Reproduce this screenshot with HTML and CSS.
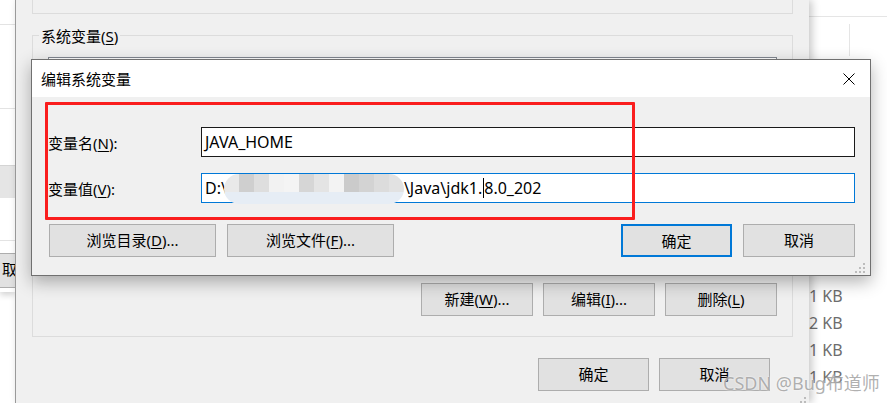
FILE: index.html
```html
<!DOCTYPE html>
<html lang="zh-CN">
<head>
    <meta charset="UTF-8">
    <title>编辑系统变量</title>
    <link rel="stylesheet" href="styles.css">
</head>
<body>
    <!-- window behind, left edge -->
    <div class="side-win">
        <div class="side-line side-top"></div>
        <div class="side-line side-mid"></div>
        <div class="side-gap"></div>
        <div class="side-band"></div>
        <div class="side-line side-low"></div>
        <div class="side-btn">取消</div>
    </div>

    <!-- explorer behind, right edge -->
    <div class="explorer">
        <div class="exp-head"></div>
        <div class="exp-split"></div>
        <div class="exp-sizes">
            <span>1 KB</span>
            <span>2 KB</span>
            <span>1 KB</span>
            <span>1 KB</span>
        </div>
    </div>

    <!-- 环境变量 window -->
    <div class="env-win">
        <div class="user-group"></div>
        <div class="sys-group">
            <div class="group-title">系统变量(<u>S</u>)</div>
            <div class="var-list"></div>
            <div class="group-actions">
                <button class="btn">新建(<u>W</u>)...</button>
                <button class="btn">编辑(<u>I</u>)...</button>
                <button class="btn">删除(<u>L</u>)</button>
            </div>
        </div>
        <div class="env-footer">
            <button class="btn">确定</button>
            <button class="btn">取消</button>
        </div>
        <svg class="env-grip" width="11" height="11" viewBox="0 0 11 11">
            <rect x="8" y="0" width="2" height="2"/><rect x="4" y="4" width="2" height="2"/><rect x="8" y="4" width="2" height="2"/>
            <rect x="0" y="8" width="2" height="2"/><rect x="4" y="8" width="2" height="2"/><rect x="8" y="8" width="2" height="2"/>
        </svg>
    </div>

    <!-- 编辑系统变量 dialog -->
    <div class="edit-dlg">
        <div class="dlg-title">
            <span>编辑系统变量</span>
            <svg class="close-x" width="12" height="12" viewBox="0 0 12 12">
                <path d="M0.5 0.5 L11.5 11.5 M11.5 0.5 L0.5 11.5" stroke="#000" stroke-width="1" fill="none"/>
            </svg>
        </div>
        <div class="dlg-body">
            <div class="field-grid">
                <label>变量名(<u>N</u>):</label>
                <div class="text-box">JAVA_HOME</div>
                <label>变量值(<u>V</u>):</label>
                <div class="text-box focused">D:\<span class="redact"></span>\Java\jdk1.<span class="caret"></span>8.0_202</div>
            </div>
            <div class="dlg-actions">
                <button class="btn wide">浏览目录(<u>D</u>)...</button>
                <button class="btn wide">浏览文件(<u>F</u>)...</button>
                <span class="spacer"></span>
                <button class="btn default">确定</button>
                <button class="btn">取消</button>
            </div>
        </div>
        <div class="red-mark"></div>
        <svg class="dlg-grip" width="11" height="11" viewBox="0 0 11 11">
            <rect x="8" y="0" width="2" height="2"/><rect x="4" y="4" width="2" height="2"/><rect x="8" y="4" width="2" height="2"/>
            <rect x="0" y="8" width="2" height="2"/><rect x="4" y="8" width="2" height="2"/><rect x="8" y="8" width="2" height="2"/>
        </svg>
    </div>

    <div class="watermark">CSDN @Bug布道师</div>
</body>
</html>
```

FILE: styles.css
```css
* {
    box-sizing: border-box;
}
body {
    margin: 0;
    width: 887px;
    height: 403px;
    overflow: hidden;
    position: relative;
    background: #fff;
    font-family: "Noto Sans", "Noto Sans CJK SC", sans-serif;
    font-size: 15px;
    color: #000;
}
u {
    text-decoration: underline;
    text-underline-offset: 2px;
}

/* left window behind */
.side-win {
    position: absolute;
    left: 0;
    top: 0;
    width: 15px;
    height: 292px;
    background: #fff;
    box-shadow: 0 3px 6px rgba(0,0,0,0.18);
    overflow: hidden;
}
.side-line {
    border-bottom: 1px solid #e3e3e3;
}
.side-top {
    height: 25px;
}
.side-mid {
    height: 84px;
}
.side-gap {
    height: 56px;
}
.side-band {
    height: 33px;
    background: #e5e5e5;
    border-top: 1px solid #d4d4d4;
}
.side-low {
    height: 43px;
}
.side-btn {
    margin: 12px 0 0 -4px;
    width: 60px;
    height: 35px;
    padding-left: 5px;
    background: #e1e1e1;
    border: 1px solid #adadad;
    line-height: 31px;
    white-space: nowrap;
}

/* explorer behind, right */
.explorer {
    position: absolute;
    left: 800px;
    top: 0;
    right: 0;
    bottom: 0;
    background: #fff;
}
.exp-head {
    height: 17px;
    border-bottom: 1px solid #e5e5e5;
}
.exp-split {
    margin: 7px 0 0 49px;
    width: 1px;
    height: 32px;
    background: #e5e5e5;
}
.exp-sizes {
    margin-top: 227px;
    padding-left: 9px;
    display: flex;
    flex-direction: column;
    font-size: 16px;
    color: #6d6d6d;
}
.exp-sizes span {
    height: 27px;
    line-height: 27px;
}

/* environment variables window */
.env-win {
    position: absolute;
    left: 15px;
    top: 0;
    width: 794px;
    height: 403px;
    background: #f0f0f0;
    border-left: 1px solid #9a9a9a;
    box-shadow: 3px 0 8px rgba(0,0,0,0.22);
}
.user-group {
    margin: 0 16px;
    height: 14px;
    border: 1px solid #dcdcdc;
    border-top: 0;
}
.sys-group {
    margin: 21px 16px 0;
    padding: 0 15px 20px;
    border: 1px solid #dcdcdc;
}
.group-title {
    width: fit-content;
    margin: -10px 0 0 -9px;
    padding: 0 2px;
    background: #f0f0f0;
    line-height: 20px;
}
.var-list {
    margin-top: 11px;
    height: 213px;
    background: #fff;
    border: 1px solid #828790;
}
.group-actions {
    margin-top: 13px;
    display: flex;
    justify-content: flex-end;
    gap: 10px;
}
.env-footer {
    margin-top: 21px;
    padding-right: 39px;
    display: flex;
    justify-content: flex-end;
    gap: 10px;
}
.env-footer .btn {
    width: 111px;
}
.env-grip {
    position: absolute;
    right: 2px;
    bottom: -5px;
    fill: #bcbcbc;
}

/* buttons */
.btn {
    width: 112px;
    height: 33px;
    padding: 0;
    background: #e1e1e1;
    border: 1px solid #adadad;
    font-family: inherit;
    font-size: 15px;
    color: #000;
    line-height: 31px;
}
.btn.wide {
    width: 167px;
}
.btn.default {
    width: 111px;
    border: 2px solid #0078d7;
}

/* edit dialog */
.edit-dlg {
    position: absolute;
    left: 31px;
    top: 59px;
    width: 840px;
    height: 217px;
    background: #f0f0f0;
    border: 1px solid #707070;
    box-shadow: 0 6px 16px rgba(0,0,0,0.3);
}
.dlg-title {
    height: 37px;
    padding: 0 15px 0 9px;
    background: #fff;
    display: flex;
    align-items: center;
    justify-content: space-between;
}
.close-x {
    display: block;
}
.dlg-body {
    padding: 30px 15px 0 16px;
}
.field-grid {
    display: grid;
    grid-template-columns: 153px 1fr;
    row-gap: 16px;
    align-items: center;
}
.field-grid label {
    line-height: 20px;
    padding-top: 1px;
}
.text-box {
    height: 30px;
    padding: 0 3px;
    background: #fff;
    border: 1px solid #1a1a1a;
    font-size: 16px;
    line-height: 28px;
    white-space: nowrap;
}
.text-box.focused {
    border-color: #0078d7;
}
.redact {
    display: inline-block;
    vertical-align: top;
    width: 180px;
    height: 30px;
    margin: 0 0 0 -3px;
    border-radius: 15px;
    background:
        linear-gradient(90deg,
            #e9e9e9 0 15px, #cfcfcf 15px 30px, #dedede 30px 45px,
            #f2f2f2 45px 60px, #f4f4f4 60px 75px, #d6d6d6 75px 90px,
            #e4e4e4 90px 105px, #f3f3f3 105px 120px, #cbcbcb 120px 135px,
            #d3d3d3 135px 150px, #dcdcdc 150px 165px, #e2e2e2 165px 180px) top / 100% 18px no-repeat,
        #e6edf5;
    filter: blur(0.6px);
}
.caret {
    display: inline-block;
    vertical-align: top;
    width: 1px;
    height: 20px;
    margin: 4px 0 0 1px;
    background: #000;
}
.dlg-actions {
    margin: 21px 0 0 1px;
    display: flex;
    gap: 11px;
}
.spacer {
    flex: 1;
}
.red-mark {
    position: absolute;
    left: 13px;
    top: 42px;
    width: 590px;
    height: 118px;
    border: 3px solid #fa1e1e;
    border-radius: 1px;
}
.dlg-grip {
    position: absolute;
    right: 4px;
    bottom: 1px;
    fill: #bcbcbc;
}

.watermark {
    position: absolute;
    left: 723px;
    top: 371px;
    font-size: 18px;
    line-height: 24px;
    color: rgba(150,150,150,0.75);
    text-shadow: 0 0 2px #fff;
    white-space: nowrap;
}
```
